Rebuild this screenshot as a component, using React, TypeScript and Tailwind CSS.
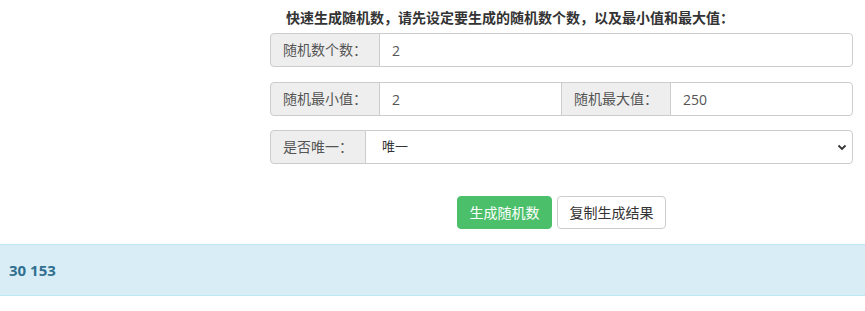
const font = { fontFamily: '"Open Sans", "Noto Sans CJK SC", sans-serif' }

function Addon({ label, className = '' }: { label: string; className?: string }) {
  return (
    <span
      className={
        'flex items-center whitespace-nowrap border border-[#ccc] bg-[#eee] px-3 text-sm text-[#555] ' + className
      }
    >
      {label}
    </span>
  )
}

function Field({ value, className = '' }: { value: string; className?: string }) {
  return (
    <input
      readOnly
      value={value}
      className={
        'h-[34px] w-0 min-w-0 flex-1 border border-[#ccc] bg-white px-3 text-sm text-[#555] outline-none ' + className
      }
    />
  )
}

export default function App() {
  return (
    <div className="w-[865px] h-[311px] bg-white overflow-hidden" style={font}>
      <div className="ml-[270px] w-[583px] pt-[8px]">
        <h4 className="pl-4 text-sm font-bold leading-[20px] text-[#333]">
          快速生成随机数，请先设定要生成的随机数个数，以及最小值和最大值：
        </h4>

        <div className="mt-[5px] flex h-[34px]">
          <Addon label="随机数个数：" className="rounded-l" />
          <Field value="2" className="-ml-px rounded-r" />
        </div>

        <div className="mt-[15px] flex h-[34px]">
          <div className="flex min-w-0 flex-1">
            <Addon label="随机最小值：" className="rounded-l" />
            <Field value="2" className="-ml-px" />
          </div>
          <div className="-ml-px flex min-w-0 flex-1">
            <Addon label="随机最大值：" />
            <Field value="250" className="-ml-px rounded-r" />
          </div>
        </div>

        <div className="mt-[14px] flex h-[34px]">
          <Addon label="是否唯一：" className="rounded-l" />
          <div className="relative -ml-px flex flex-1 items-center rounded-r border border-[#ccc] bg-white pl-4 text-[13px] text-[#333]">
            唯一
            <svg
              className="absolute right-[5px] top-1/2 -translate-y-1/2"
              width="10"
              height="10"
              viewBox="0 0 10 10"
              fill="none"
            >
              <path d="M1.5 3.5 L5 7 L8.5 3.5" stroke="#333" strokeWidth="1.8" />
            </svg>
          </div>
        </div>

        <div className="mt-[32px] flex justify-center gap-[5px]">
          <button className="h-[33px] w-[95px] rounded border border-[#4cbf6b] bg-[#4cbf6b] text-sm text-white">
            生成随机数
          </button>
          <button className="h-[33px] w-[109px] rounded border border-[#ccc] bg-white text-sm text-[#333]">
            复制生成结果
          </button>
        </div>
      </div>

      <div className="mt-[15px] flex h-[52px] items-center border-y border-[#bce8f1] bg-[#d9edf7] pl-[9px] text-[15px] font-bold text-[#31708f]">
        30 153
      </div>
    </div>
  )
}
